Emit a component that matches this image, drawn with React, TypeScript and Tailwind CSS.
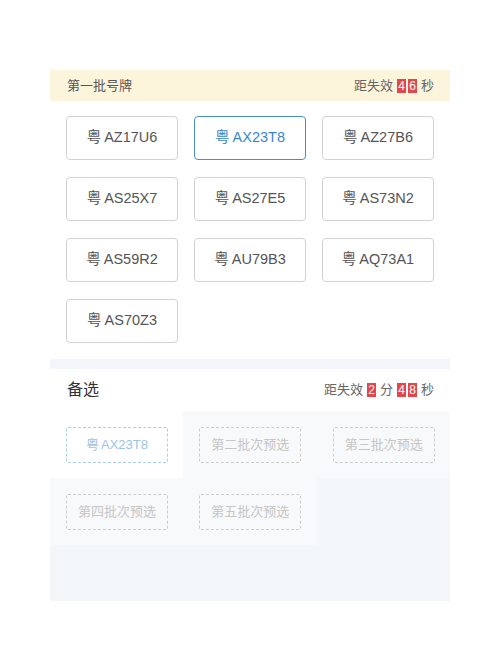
import React from "react";

const FONT = {
  fontFamily: '"Liberation Sans", "Noto Sans CJK SC", sans-serif',
};

const firstBatch = [
  "AZ17U6",
  "AX23T8",
  "AZ27B6",
  "AS25X7",
  "AS27E5",
  "AS73N2",
  "AS59R2",
  "AU79B3",
  "AQ73A1",
  "AS70Z3",
];

function Digit({ d }: { d: string }) {
  return (
    <span className="mx-[1px] inline-flex h-[14px] w-[9px] items-center justify-center bg-[#e2474c] text-[12px] leading-none text-white">
      {d}
    </span>
  );
}

function Countdown({ parts }: { parts: (string | string[])[] }) {
  return (
    <div className="flex items-center gap-[3px] text-[13px] text-[#666]">
      {parts.map((p, i) =>
        Array.isArray(p) ? (
          <span key={i} className="flex">
            {p.map((d, j) => (
              <Digit key={j} d={d} />
            ))}
          </span>
        ) : (
          <span key={i}>{p}</span>
        )
      )}
    </div>
  );
}

export default function App() {
  const selected = "AX23T8";
  const slots = ["第二批次预选", "第三批次预选", "第四批次预选", "第五批次预选"];

  return (
    <div className="min-h-[667px] w-[500px] bg-white pt-[70px]" style={FONT}>
      <div className="mx-[50px] w-[400px]">
        {/* first batch header */}
        <div className="flex h-[31px] items-center justify-between bg-[#fdf4dc] px-4">
          <span className="pl-[1px] text-[13px] text-[#555]">第一批号牌</span>
          <Countdown parts={["距失效", ["4", "6"], "秒"]} />
        </div>

        {/* plate list */}
        <div className="grid grid-cols-3 gap-x-4 gap-y-[17px] px-4 pb-4 pt-[15px]">
          {firstBatch.map((p) => {
            const on = p === selected;
            return (
              <div
                key={p}
                className={
                  on
                    ? "flex h-11 items-center justify-center gap-[3px] rounded-[4px] border border-[#4a8dce] text-[14.5px] text-[#3b86c9]"
                    : "flex h-11 items-center justify-center gap-[3px] rounded-[4px] border border-[#d2d2d2] text-[14.5px] text-[#555]"
                }
              >
                <span>粤</span>
                <span>{p}</span>
              </div>
            );
          })}
        </div>

        <div className="h-[10px] bg-[#f3f6fa]" />

        {/* backup header */}
        <div className="flex h-[42px] items-center justify-between px-4">
          <span className="pl-[1px] text-[16px] text-[#333]">备选</span>
          <Countdown parts={["距失效", ["2"], "分", ["4", "8"], "秒"]} />
        </div>

        {/* backup slots */}
        <div className="h-[190px] bg-[#f4f7fa]">
          <div className="grid grid-cols-3">
            <div className="flex h-[67px] items-center bg-white pl-4">
              <div className="flex h-9 w-[102px] items-center justify-center gap-[2px] rounded-[2px] border border-dashed border-[#a9cdea] text-[13px] text-[#9cc4e6]">
                <span>粤</span>
                <span>AX23T8</span>
              </div>
            </div>
            {slots.map((s) => (
              <div key={s} className="flex h-[67px] items-center bg-[#f8f9fa] pl-4">
                <div className="flex h-9 w-[102px] items-center justify-center rounded-[2px] border border-dashed border-[#cdcdcd] text-[13px] text-[#c6c6c6]">
                  {s}
                </div>
              </div>
            ))}
          </div>
        </div>
      </div>
    </div>
  );
}
